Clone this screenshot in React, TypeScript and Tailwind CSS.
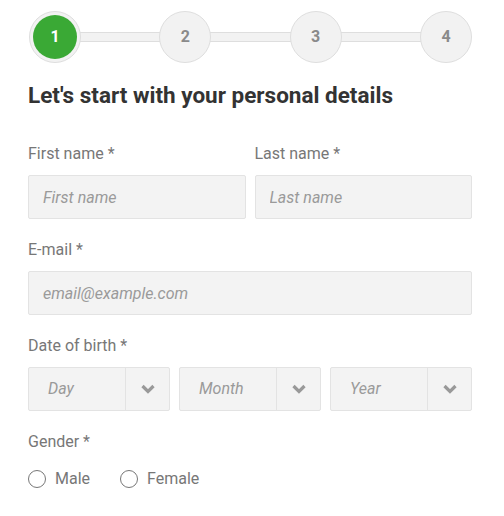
import { useState } from 'react';

const steps = [1, 2, 3, 4];

function Chevron() {
  return (
    <svg width="14" height="10" viewBox="0 0 14 10" className="text-[#999]">
      <path d="M1.5 2 L7 7.5 L12.5 2" fill="none" stroke="currentColor" strokeWidth="3.2" strokeLinejoin="miter" />
    </svg>
  );
}

function Field({ label, children }: { label: string; children: React.ReactNode }) {
  return (
    <div className="flex flex-col gap-[10px]">
      <label className="text-[16px] leading-[22px] text-[#777]">{label}</label>
      {children}
    </div>
  );
}

function TextInput({ placeholder }: { placeholder: string }) {
  return (
    <input
      type="text"
      placeholder={placeholder}
      className="h-[44px] w-full rounded-[2px] border border-[#e3e3e3] bg-[#f3f3f3] px-[14px] text-[16px] italic text-[#555] placeholder:text-[#9a9a9a] focus:outline-none"
    />
  );
}

function Select({ placeholder }: { placeholder: string }) {
  return (
    <div className="flex h-[44px] flex-1 rounded-[2px] border border-[#e3e3e3] bg-[#f3f3f3]">
      <div className="flex flex-1 items-center pl-[19px] text-[16px] italic text-[#9a9a9a]">{placeholder}</div>
      <div className="flex w-[44px] items-center justify-center border-l border-[#e3e3e3]">
        <Chevron />
      </div>
    </div>
  );
}

function Radio({ label, checked, onClick }: { label: string; checked: boolean; onClick: () => void }) {
  return (
    <button onClick={onClick} className="flex items-center gap-[9px] text-[16px] leading-[24px] text-[#777]">
      <span className="flex h-[18px] w-[18px] items-center justify-center rounded-full border border-[#777] bg-white">
        {checked && <span className="h-[8px] w-[8px] rounded-full bg-[#3aa935]" />}
      </span>
      {label}
    </button>
  );
}

export default function App() {
  const [gender, setGender] = useState<string | null>(null);

  return (
    <div className="min-h-screen bg-white pl-[28px] pr-[32px] pt-[11px]" style={{ fontFamily: 'Roboto, "Liberation Sans", sans-serif' }}>
      {/* stepper */}
      <div className="relative flex items-center justify-between pl-[1px]">
        <div className="absolute left-[20px] right-[20px] top-1/2 h-[10px] -translate-y-1/2 border-y border-[#dedede] bg-[#f2f2f2]" />
        {steps.map((s) => (
          <div key={s} className="relative flex h-[52px] w-[52px] items-center justify-center rounded-full border border-[#dedede] bg-[#f2f2f2]">
            <div
              className={
                s === 1
                  ? 'flex h-[44px] w-[44px] items-center justify-center rounded-full bg-[#3aa935] text-[16px] font-bold text-white'
                  : 'flex h-[44px] w-[44px] items-center justify-center rounded-full text-[16px] font-bold text-[#8a8a8a]'
              }
            >
              {s}
            </div>
          </div>
        ))}
      </div>

      <h1 className="mt-[18px] text-[22.5px] font-bold leading-[28px] text-[#333]">Let's start with your personal details</h1>

      <div className="mt-[34px] flex flex-col gap-[20px]">
        <div className="flex gap-[9px]">
          <div className="flex-1">
            <Field label="First name *">
              <TextInput placeholder="First name" />
            </Field>
          </div>
          <div className="flex-1">
            <Field label="Last name *">
              <TextInput placeholder="Last name" />
            </Field>
          </div>
        </div>

        <Field label="E-mail *">
          <TextInput placeholder="email@example.com" />
        </Field>

        <Field label="Date of birth *">
          <div className="flex gap-[9px]">
            <Select placeholder="Day" />
            <Select placeholder="Month" />
            <Select placeholder="Year" />
          </div>
        </Field>

        <Field label="Gender *">
          <div className="mt-[4px] flex gap-[30px]">
            <Radio label="Male" checked={gender === 'male'} onClick={() => setGender('male')} />
            <Radio label="Female" checked={gender === 'female'} onClick={() => setGender('female')} />
          </div>
        </Field>
      </div>
    </div>
  );
}
